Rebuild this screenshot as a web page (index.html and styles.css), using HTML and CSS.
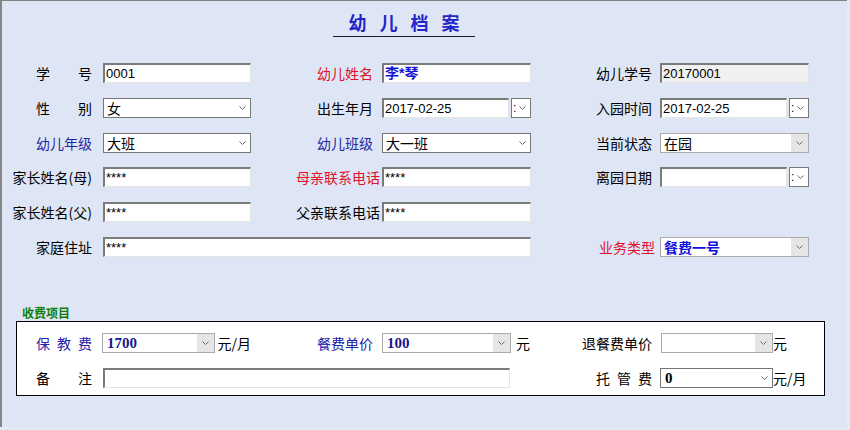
FILE: index.html
```html
<!DOCTYPE html>
<html lang="zh-CN">
<head>
<meta charset="utf-8">
<title>幼儿档案</title>
<link rel="stylesheet" href="styles.css">
</head>
<body>
<div class="window">
  <div class="title-row"><div class="title">幼 儿 档 案</div></div>

  <div class="form-grid">
    <!-- row 1 -->
    <div class="lbl l1"><span class="just">学 号</span></div>
    <div class="inset">0001</div>
    <div class="lbl l2 red">幼儿姓名</div>
    <div class="inset name">李*琴</div>
    <div class="lbl l3">幼儿学号</div>
    <div class="inset disabled">20170001</div>

    <!-- row 2 -->
    <div class="lbl l1"><span class="just">性 别</span></div>
    <div class="sel"><span class="v">女</span><span class="arr"><svg class="chev" viewBox="0 0 7 4"><path d="M0.5 0.5 L3.5 3.5 L6.5 0.5"/></svg></span></div>
    <div class="lbl l2">出生年月</div>
    <div class="date"><div class="inset">2017-02-25</div><div class="dbtn"><span class="colon">:</span><svg class="chev" viewBox="0 0 7 4"><path d="M0.5 0.5 L3.5 3.5 L6.5 0.5"/></svg></div></div>
    <div class="lbl l3">入园时间</div>
    <div class="date"><div class="inset">2017-02-25</div><div class="dbtn"><span class="colon">:</span><svg class="chev" viewBox="0 0 7 4"><path d="M0.5 0.5 L3.5 3.5 L6.5 0.5"/></svg></div></div>

    <!-- row 3 -->
    <div class="lbl l1 blue">幼儿年级</div>
    <div class="sel"><span class="v">大班</span><span class="arr"><svg class="chev" viewBox="0 0 7 4"><path d="M0.5 0.5 L3.5 3.5 L6.5 0.5"/></svg></span></div>
    <div class="lbl l2 blue">幼儿班级</div>
    <div class="sel"><span class="v">大一班</span><span class="arr"><svg class="chev" viewBox="0 0 7 4"><path d="M0.5 0.5 L3.5 3.5 L6.5 0.5"/></svg></span></div>
    <div class="lbl l3">当前状态</div>
    <div class="sel gray"><span class="v">在园</span><span class="arr"><svg class="chev" viewBox="0 0 7 4"><path d="M0.5 0.5 L3.5 3.5 L6.5 0.5"/></svg></span></div>

    <!-- row 4 -->
    <div class="lbl l1">家长姓名(母)</div>
    <div class="inset">****</div>
    <div class="lbl l2 long red">母亲联系电话</div>
    <div class="inset">****</div>
    <div class="lbl l3">离园日期</div>
    <div class="date"><div class="inset"></div><div class="dbtn"><span class="colon">:</span><svg class="chev" viewBox="0 0 7 4"><path d="M0.5 0.5 L3.5 3.5 L6.5 0.5"/></svg></div></div>

    <!-- row 5 -->
    <div class="lbl l1">家长姓名(父)</div>
    <div class="inset">****</div>
    <div class="lbl l2 long">父亲联系电话</div>
    <div class="inset">****</div>
    <div></div>
    <div></div>

    <!-- row 6 -->
    <div class="lbl l1">家庭住址</div>
    <div class="inset wide">****</div>
    <div class="lbl l3 red biz">业务类型</div>
    <div class="sel gray"><span class="v bblue">餐费一号</span><span class="arr"><svg class="chev" viewBox="0 0 7 4"><path d="M0.5 0.5 L3.5 3.5 L6.5 0.5"/></svg></span></div>
  </div>

  <div class="fee-title">收费项目</div>
  <div class="fee-box">
    <div class="lbl f1 blue2"><span class="just">保 教 费</span></div>
    <div class="cell">
      <div class="sel gray s-baojiao"><span class="v bnum">1700</span><span class="arr"><svg class="chev" viewBox="0 0 7 4"><path d="M0.5 0.5 L3.5 3.5 L6.5 0.5"/></svg></span></div>
      <span class="unit u3">元/月</span>
    </div>
    <div class="lbl l2 blue2">餐费单价</div>
    <div class="cell">
      <div class="sel gray s-canfei"><span class="v bnum">100</span><span class="arr"><svg class="chev" viewBox="0 0 7 4"><path d="M0.5 0.5 L3.5 3.5 L6.5 0.5"/></svg></span></div>
      <span class="unit u5">元</span>
    </div>
    <div class="lbl l3">退餐费单价</div>
    <div class="cell">
      <div class="sel gray s-right s-shift"><span class="v"></span><span class="arr"><svg class="chev" viewBox="0 0 7 4"><path d="M0.5 0.5 L3.5 3.5 L6.5 0.5"/></svg></span></div>
      <span class="unit">元</span>
    </div>

    <div class="lbl f1"><span class="just">备 注</span></div>
    <div class="inset note"></div>
    <div class="lbl l3"><span class="just">托 管 费</span></div>
    <div class="cell">
      <div class="sel s-right"><span class="v bnum black">0</span><span class="arr"><svg class="chev" viewBox="0 0 7 4"><path d="M0.5 0.5 L3.5 3.5 L6.5 0.5"/></svg></span></div>
      <span class="unit">元/月</span>
    </div>
  </div>
</div>
</body>
</html>
```

FILE: styles.css
```css
* { box-sizing: border-box; }

html, body {
  margin: 0;
  padding: 0;
}

body {
  width: 850px;
  height: 430px;
  overflow: hidden;
  background: #e4ebf7;
  font-family: "Noto Sans CJK SC", sans-serif;
  font-size: 14px;
  color: #000;
}

.window {
  width: 847px;
  height: 427px;
  background: #dee6f5;
  border-top: 1px solid #808080;
  border-left: 2px solid #858585;
}

/* title */
.title-row {
  padding-top: 13px;
  padding-left: 331px;
}

.title {
  width: 142px;
  border-bottom: 1px solid #1e1e1e;
  padding-bottom: 2px;
  text-align: center;
  font-family: "Liberation Sans", "Noto Sans CJK SC", sans-serif;
  font-size: 18px;
  font-weight: bold;
  line-height: 20px;
  word-spacing: 8px;
  color: #2424c8;
}

/* main form */
.form-grid {
  display: grid;
  grid-template-columns: 101px 148px 131px 149px 129px 149px;
  grid-auto-rows: 20px;
  row-gap: 14.8px;
  margin-top: 26px;
}

.lbl {
  line-height: 20px;
  text-align: right;
  white-space: nowrap;
}

.l1 { padding-right: 11px; }
.l2 { padding-right: 9px; }
.l2.long { padding-right: 2px; }
.l3 { padding-right: 8px; }
.l3.biz { padding-right: 5px; }
.f1 { padding-right: 11px; }

.just {
  display: inline-block;
  width: 56px;
  text-align: justify;
  text-align-last: justify;
  vertical-align: top;
}

.red { color: #e0102c; }
.blue { color: #2424a4; }
.blue2 { color: #2222aa; }

/* sunken text box */
.inset {
  height: 20px;
  background: #fff;
  border-top: 2px solid #7b7b7b;
  border-left: 2px solid #7b7b7b;
  border-right: 1px solid #e4e4e4;
  border-bottom: 1px solid #e4e4e4;
  padding-left: 1px;
  font-family: "Liberation Sans", "Noto Sans CJK SC", sans-serif;
  font-size: 13px;
  line-height: 17px;
  white-space: nowrap;
  overflow: hidden;
}

.inset.name {
  font-size: 14px;
  font-weight: bold;
  color: #1414d8;
}

.inset.disabled { background: #f0f0f0; }

.inset.wide { grid-column: 2 / 5; }

/* combo box */
.sel {
  display: flex;
  align-items: center;
  height: 20px;
  background: #fff;
  border: 1px solid #767676;
}

.sel .v {
  flex: 1;
  padding-left: 3px;
  line-height: 18px;
  white-space: nowrap;
  overflow: hidden;
}

.sel .arr {
  width: 16px;
  height: 18px;
  display: flex;
  align-items: center;
  justify-content: center;
}

.sel.gray { border-color: #ababab; }

.sel.gray .arr {
  width: 17px;
  background: #e5e5e5;
}

.chev {
  width: 7px;
  height: 4px;
  fill: none;
  stroke: #6a6a6a;
  stroke-width: 1;
}

.bblue {
  font-weight: bold;
  color: #0c0cdc;
}

.bnum {
  font-family: "Liberation Serif", serif;
  font-weight: bold;
  font-size: 15px;
  color: #16168c;
}

.sel .v.bnum { padding-left: 4px; }

.bnum.black { color: #000; }

/* date picker */
.date {
  display: flex;
  gap: 2px;
}

.date .inset {
  width: 127px;
}

.dbtn {
  width: 20px;
  height: 20px;
  background: #fff;
  border: 1px solid #787878;
  display: flex;
  align-items: center;
  padding-left: 1px;
}

.dbtn .colon {
  width: 5px;
  font-family: "Liberation Sans", sans-serif;
  font-size: 12px;
  line-height: 18px;
}

.dbtn .chev { margin-left: 1px; }

/* fee section */
.fee-title {
  margin: 49px 0 0 20px;
  font-size: 12px;
  font-weight: bold;
  line-height: 14px;
  color: #0b7d0b;
}

.fee-box {
  margin: 1px 0 0 14px;
  width: 809px;
  background: #fff;
  border: 1px solid #000;
  padding: 11px 0 7px;
  display: grid;
  grid-template-columns: 86px 148px 131px 149px 129px 1fr;
  grid-auto-rows: 20px;
  row-gap: 15px;
}

.cell {
  display: flex;
  align-items: center;
}

.unit {
  line-height: 20px;
  white-space: nowrap;
}

.u3 { margin-left: 3px; }
.u5 { margin-left: 5px; }

.s-baojiao {
  width: 114px;
  margin-left: -1px;
}

.s-canfei { width: 129px; }

.s-right { width: 113px; }
.s-shift { margin-left: 1px; width: 112px; }

.inset.note {
  grid-column: 2 / 5;
  width: 407px;
}
```
